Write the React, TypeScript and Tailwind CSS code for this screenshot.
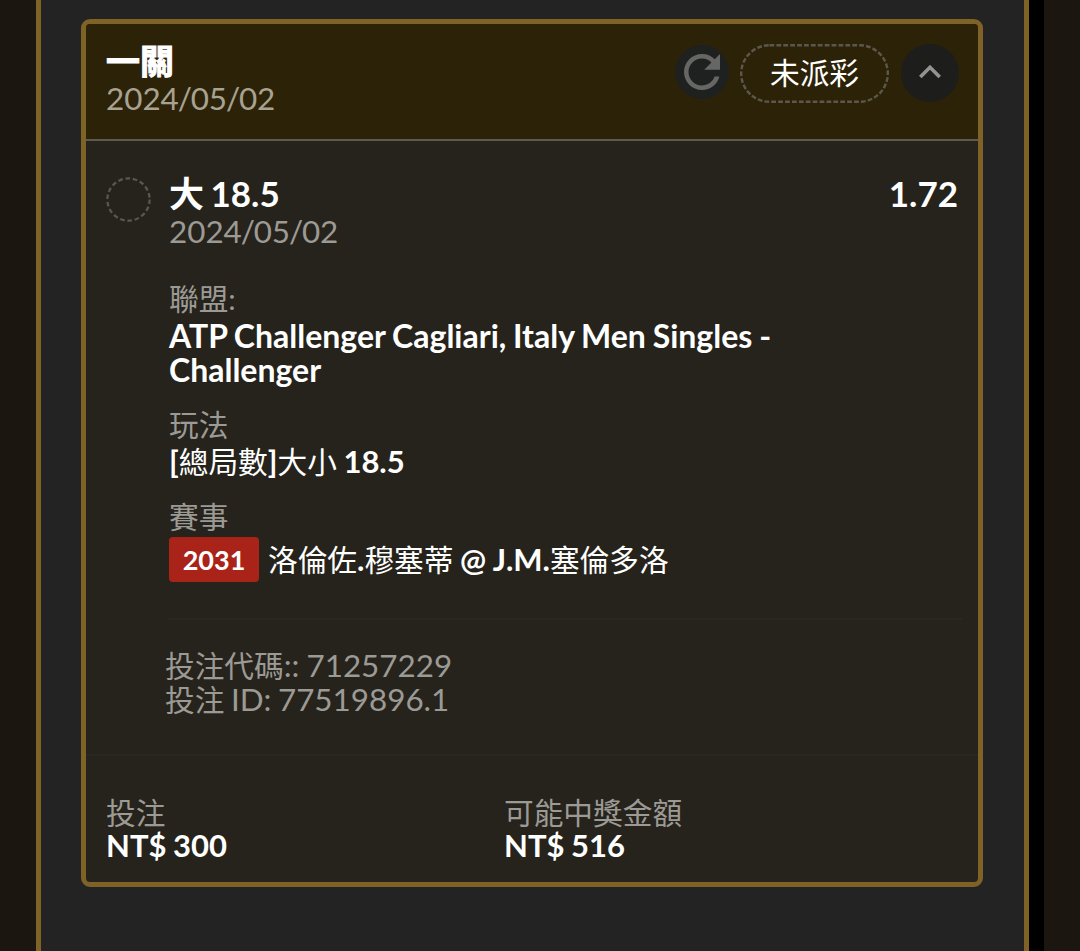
import React from "react";
import { MdExpandLess, MdRefresh } from "react-icons/md";

interface ZhProps { children: React.ReactNode; className?: string }

// Chinese glyphs run slightly smaller than the latin ones beside them
function Zh({ children, className = "" }: ZhProps) {
  return <span className={`text-[29.7px] leading-none font-normal ${className}`}>{children}</span>;
}

function TicketDate({ value }: { value: string }) {
  const [year, month, day] = value.split("/");
  return (
    <span className="text-[31.4px] leading-none">
      {year}<span className="-mx-[1.2px]">/</span>{month}<span className="-mx-[1.2px]">/</span>{day}
    </span>
  );
}

function TicketHeader() {
  return (
    <div className="flex h-[117px] items-start border-b-2 border-[#5f5a4e] bg-[#2c2208] px-5 pt-[18px]">
      <div>
        <div className="mb-[2px] h-[37px] text-[34px] leading-[37px] font-bold text-white [-webkit-text-stroke:1px_white]">一關</div>
        <div className="h-[34px] text-[#a8a292]"><TicketDate value="2024/05/02" /></div>
      </div>
      <div className="ml-auto flex items-start pt-[2px]">
        <button className="mt-px flex h-[54px] w-[54px] items-center justify-center rounded-full bg-[#1f2020] text-[54px] text-[#666665]">
          <MdRefresh />
        </button>
        <div className="relative ml-[11px] flex h-[59px] w-[149px] items-center justify-center pb-px">
          <svg className="absolute inset-0" width="149" height="59" fill="none" aria-hidden="true">
            <rect x="1.2" y="1.2" width="146.6" height="56.6" rx="28.3" stroke="#5c574b" strokeWidth="2.4" strokeDasharray="4.8 2.1" />
          </svg>
          <Zh className="text-white">未派彩</Zh>
        </div>
        <button className="ml-[12px] flex h-[58px] w-[58px] items-center justify-center rounded-full bg-[#1d1d1c] pb-[2px] text-[44px] text-[#929292] -mr-px">
          <MdExpandLess />
        </button>
      </div>
    </div>
  );
}

function Selection() {
  return (
    <div className="flex h-[479px] pl-5">
      <svg className="mt-[36px] h-[45px] w-[45px] shrink-0" viewBox="0 0 46 46" fill="none" aria-hidden="true">
        <circle cx="23" cy="23" r="21.6" stroke="#595752" strokeWidth="2.3" strokeDasharray="4.7 2.84" />
      </svg>
      <div className="ml-[18px] w-[793px] border-b-2 border-[#2a2722] pt-8">
        <div className="flex h-10 justify-between pr-1 text-[35px] leading-10 font-bold text-white">
          <span className="[word-spacing:-2px]">大 18.5</span>
          <span>1.72</span>
        </div>
        <div className="mt-px h-[34px]"><TicketDate value="2024/05/02" /></div>

        <div className="mt-[33px] h-[34px]"><Zh>聯盟:</Zh></div>
        <div className="mt-[4px] w-[640px] text-[32px] font-bold text-white [word-spacing:-1px]">
          ATP Challenger Cagliari, Italy Men Singles - Challenger
        </div>

        <div className="mt-[20px] h-[34px]"><Zh>玩法</Zh></div>
        <div className="mt-[3px] h-[34px] font-bold text-white">
          [<Zh>總局數</Zh>]<Zh>大小</Zh> 18.5
        </div>

        <div className="mt-[21px] h-[34px]"><Zh>賽事</Zh></div>
        <div className="mt-[4px] flex items-center font-bold text-white">
          <span className="flex h-[45px] w-[90px] items-center justify-center rounded-[4px] bg-[#a92318] text-[27px]">2031</span>
          <span className="-mt-px ml-[9px] whitespace-nowrap">
            <Zh>洛倫佐</Zh>.<Zh>穆塞蒂</Zh> @ J.M.<Zh>塞倫多洛</Zh>
          </span>
        </div>
      </div>
    </div>
  );
}

function TicketCodes() {
  return (
    <div className="h-[136px] border-b-2 border-[#2a2722] pl-[79px] pt-[28px] text-[31.4px]">
      <div className="h-[34px]"><Zh>投注代碼</Zh>:: 71257229</div>
      <div className="h-[34px] [word-spacing:-1.5px]"><Zh>投注</Zh> ID: 77519896.1</div>
    </div>
  );
}

function TicketTotals() {
  return (
    <div className="flex pl-5 pt-[39px]">
      <div className="w-[398px]">
        <div className="h-[33px]"><Zh>投注</Zh></div>
        <div className="font-bold text-white">NT$ 300</div>
      </div>
      <div>
        <div className="h-[33px]"><Zh>可能中獎金額</Zh></div>
        <div className="font-bold text-white">NT$ 516</div>
      </div>
    </div>
  );
}

export default function App() {
  return (
    <div lang="zh-Hant" className="flex h-[951px] w-[1080px] overflow-hidden bg-[#1b1710] font-[Lato,'Noto_Sans_CJK_TC',sans-serif] text-[31px] leading-[34px] text-[#9c9a95] [word-spacing:-1px]">
      <main className="ml-9 w-[993px] border-x-5 border-[#7f6226] bg-[#232323] px-10 pt-[19px]">
        <section className="h-[868px] w-[902px] overflow-hidden rounded-[9px] border-5 border-[#7f6226] bg-[#26231c]">
          <TicketHeader />
          <Selection />
          <TicketCodes />
          <TicketTotals />
        </section>
      </main>
      <div className="w-[15px] bg-black" />
    </div>
  );
}
